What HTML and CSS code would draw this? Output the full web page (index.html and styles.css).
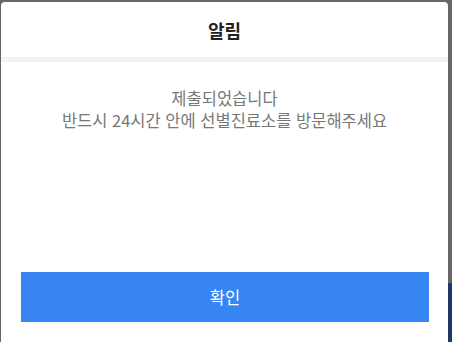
FILE: index.html
```html
<!DOCTYPE html>
<html lang="ko">
  <head>
    <meta charset="UTF-8" />
    <meta name="viewport" content="width=device-width, initial-scale=1.0" />
    <title>알림</title>
    <link rel="stylesheet" href="styles.css">
  </head>
  <body>
    <div class="modal">
      <div class="modal-head">알림</div>
      <div class="modal-sep"></div>
      <div class="modal-body">
        <p>제출되었습니다</p>
        <p>반드시 24시간 안에 선별진료소를 방문해주세요</p>
      </div>
      <div class="modal-foot">
        <button class="btn-ok">확인</button>
      </div>
    </div>
  </body>
</html>
```

FILE: styles.css
```css
* {
  margin: 0;
  padding: 0;
  box-sizing: border-box;
}

html,
body {
  height: 100%;
}

body {
  background: #676767;
  background-image: linear-gradient(to bottom, #676767 283px, #1f3866 283px);
  background-size: 4px 100%;
  background-position: right top;
  background-repeat: no-repeat;
  font-family: "Noto Sans CJK KR", "Noto Sans", sans-serif;
  padding: 2px 4px 0 1px;
  overflow: hidden;
}

.modal {
  background: #fff;
  border-radius: 4px 4px 0 0;
  height: 345px;
  display: flex;
  flex-direction: column;
}

.modal-head {
  height: 55px;
  display: flex;
  align-items: center;
  justify-content: center;
  font-size: 18px;
  font-weight: bold;
  color: #222;
}

.modal-sep {
  height: 5px;
  background: #f3f3f6;
}

.modal-body {
  padding-top: 25px;
  height: 210px;
  text-align: center;
  color: #777;
  font-size: 16.5px;
  line-height: 22px;
}

.modal-foot {
  padding: 0 19px 0 20px;
}

.btn-ok {
  width: 100%;
  height: 50px;
  border: none;
  background: #3785f2;
  color: #fff;
  font-family: inherit;
  font-size: 16.5px;
}
```
